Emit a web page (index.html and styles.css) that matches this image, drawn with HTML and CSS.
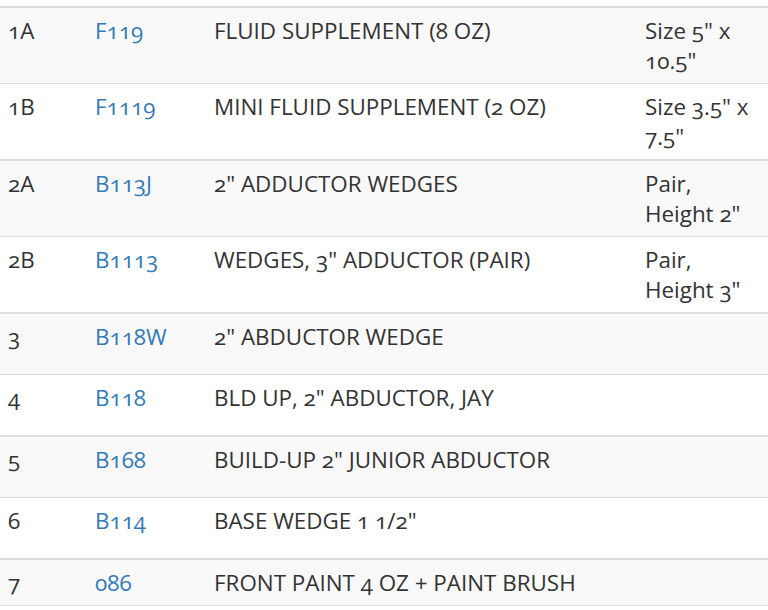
FILE: index.html
```html
<!DOCTYPE html>
<html>
<head>
<meta charset="utf-8">
<link rel="stylesheet" href="styles.css">
</head>
<body>
<table class="parts">
  <colgroup>
    <col class="c-num"><col class="c-code"><col class="c-desc"><col class="c-note">
  </colgroup>
  <tbody>
    <tr><td>1A</td><td><a href="#">F119</a></td><td>FLUID SUPPLEMENT (8 OZ)</td><td>Size 5" x 10.5"</td></tr>
    <tr><td>1B</td><td><a href="#">F1119</a></td><td>MINI FLUID SUPPLEMENT (2 OZ)</td><td>Size 3.5" x 7.5"</td></tr>
  </tbody>
  <tbody>
    <tr><td>2A</td><td><a href="#">B113J</a></td><td>2" ADDUCTOR WEDGES</td><td>Pair, Height 2"</td></tr>
    <tr><td>2B</td><td><a href="#">B1113</a></td><td>WEDGES, 3" ADDUCTOR (PAIR)</td><td>Pair, Height 3"</td></tr>
  </tbody>
  <tbody>
    <tr class="tall"><td>3</td><td><a href="#">B118W</a></td><td>2" ABDUCTOR WEDGE</td><td></td></tr>
    <tr class="tall"><td>4</td><td><a href="#">B118</a></td><td>BLD UP, 2" ABDUCTOR, JAY</td><td></td></tr>
  </tbody>
  <tbody>
    <tr class="tall"><td>5</td><td><a href="#">B168</a></td><td>BUILD-UP 2" JUNIOR ABDUCTOR</td><td></td></tr>
    <tr class="tall"><td>6</td><td><a href="#">B114</a></td><td>BASE WEDGE 1 1/2"</td><td></td></tr>
  </tbody>
  <tbody>
    <tr><td>7</td><td><a href="#">086</a></td><td>FRONT PAINT 4 OZ + PAINT BRUSH</td><td></td></tr>
  </tbody>
</table>
</body>
</html>
```
FILE: styles.css
```css
html, body {
  margin: 0;
  padding: 0;
  background: #fff;
}
body {
  padding-top: 6px;
  font-family: "Open Sans", "Noto Sans", sans-serif;
  font-size: 22.4px;
  line-height: 30px;
  color: #333;
  font-variant-numeric: oldstyle-nums;
}
.parts {
  width: 768px;
  table-layout: fixed;
  border-collapse: collapse;
  border-spacing: 0;
  border-top: 2px solid #ddd;
  border-bottom: 1px solid #ddd;
}
.c-num { width: 87px; }
.c-code { width: 119px; }
.c-desc { width: 431px; }
.c-note { width: 131px; }
.parts td {
  padding: 8px 8px 7px;
  vertical-align: top;
  border-top: 1px solid #ddd;
}
.parts tbody tr:first-child td {
  border-top: 0;
}
.parts tbody + tbody {
  border-top: 2px solid #ddd;
}
.parts tbody tr:nth-child(odd) {
  background: #f9f9f9;
}
.parts tr.tall td {
  height: 45px;
}
.parts a {
  color: #337ab7;
  text-decoration: none;
}
```
